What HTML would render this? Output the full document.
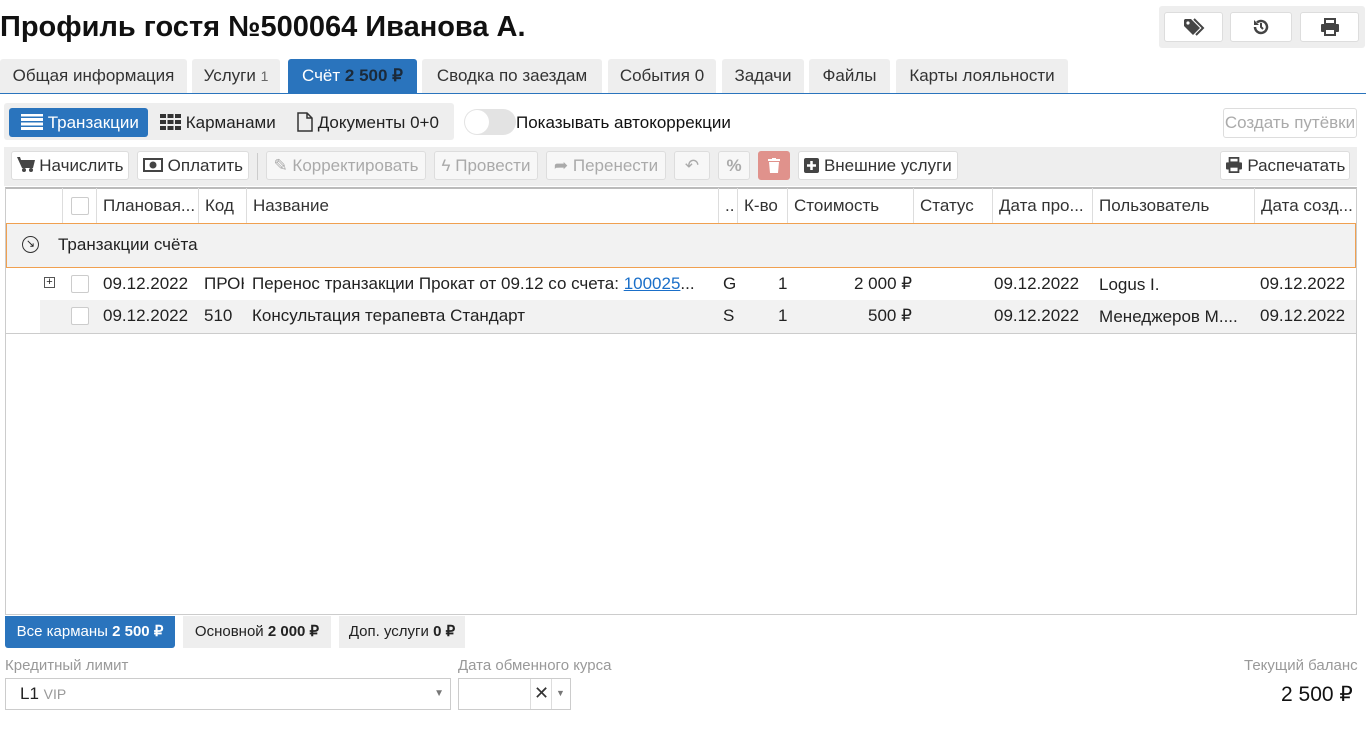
<!DOCTYPE html>
<html><head><meta charset="utf-8"><style>
*{box-sizing:border-box;margin:0;padding:0}
body{width:1368px;height:736px;background:#fff;font-family:"Liberation Sans",sans-serif;font-size:17px;color:#222;position:relative;overflow:hidden}
.a{position:absolute;white-space:nowrap}
h1{position:absolute;left:0;top:11px;font-family:"Liberation Sans",sans-serif;font-size:29px;font-weight:bold;color:#111}
.tab{position:absolute;top:59px;height:34px;background:#eee;border-radius:3px 3px 0 0;line-height:34px;text-align:center;color:#333}
.btn{position:absolute;height:29px;border:1px solid #ddd;border-radius:3px;background:#fff;line-height:27px;text-align:center;color:#333;font-size:17px}
.dis{color:#aaa;background:#f7f7f7}
.th{position:absolute;top:188px;height:35px;line-height:35px;border-left:1px solid #ddd;padding-left:6px;color:#333;overflow:hidden}
.cb{position:absolute;width:18px;height:18px;border:1px solid #ccc;background:#fff;border-radius:2px}
.td{position:absolute;line-height:32px}
</style></head><body>
<h1>Профиль гостя №500064 Иванова А.</h1>
<div class="a" style="left:1159px;top:6px;width:206px;height:42px;background:#eee;border-radius:3px"></div>
<div class="btn" style="left:1164px;top:12px;width:59px;height:30px">
<svg width="22" height="18" viewBox="0 0 22 18" style="margin-top:5px"><path d="M1 2v6l9 9 7-7-9-9H2z" fill="#444"/><circle cx="5" cy="5" r="1.6" fill="#fff"/><path d="M11 1l9 9-7 7" stroke="#444" stroke-width="2" fill="none"/></svg></div>
<div class="btn" style="left:1230px;top:12px;width:62px;height:30px">
<svg width="18" height="18" viewBox="0 0 18 18" style="margin-top:5px"><path d="M3 9a6 6 0 1 0 2-4.5" stroke="#444" stroke-width="2.5" fill="none"/><path d="M2 2v5h5z" fill="#444"/><path d="M9 5v4l2 2" stroke="#444" stroke-width="2" fill="none"/></svg></div>
<div class="btn" style="left:1300px;top:12px;width:59px;height:30px">
<svg width="20" height="18" viewBox="0 0 20 18" style="margin-top:5px"><rect x="5" y="1" width="10" height="5" fill="none" stroke="#444" stroke-width="2"/><rect x="1" y="6" width="18" height="8" rx="1" fill="#444"/><rect x="5" y="11" width="10" height="6" fill="#fff" stroke="#444" stroke-width="2"/></svg></div>

<div class="tab" style="left:0;width:187px">Общая информация</div>
<div class="tab" style="left:192px;width:88px">Услуги <span style="font-size:14px;color:#666">1</span></div>
<div class="tab" style="left:288px;width:129px;background:#2a74bd;color:#fff">Счёт <b style="color:#1b2a3a">2 500 ₽</b></div>
<div class="tab" style="left:422px;width:180px">Сводка по заездам</div>
<div class="tab" style="left:608px;width:108px">События 0</div>
<div class="tab" style="left:722px;width:82px">Задачи</div>
<div class="tab" style="left:809px;width:81px">Файлы</div>
<div class="tab" style="left:896px;width:172px">Карты лояльности</div>
<div class="a" style="left:0;top:93px;width:1366px;height:1px;background:#2a74bd"></div>

<div class="a" style="left:4px;top:103px;width:450px;height:37px;background:#eee;border-radius:3px"></div>
<div class="a" style="left:9px;top:108px;width:139px;height:29px;background:#2a74bd;border-radius:3px;color:#fff;line-height:29px;padding-left:12px">
<svg width="22" height="16" viewBox="0 0 22 16" style="vertical-align:-2px"><path d="M0 1h22M0 5.5h22M0 10h22M0 14.5h22" stroke="#fff" stroke-width="3"/></svg> Транзакции</div>
<div class="a" style="left:160px;top:108px;line-height:29px">
<svg width="21" height="16" viewBox="0 0 21 16" style="vertical-align:-2px" fill="#333"><rect x="0" y="0" width="6" height="4"/><rect x="7.5" y="0" width="6" height="4"/><rect x="15" y="0" width="6" height="4"/><rect x="0" y="6" width="6" height="4"/><rect x="7.5" y="6" width="6" height="4"/><rect x="15" y="6" width="6" height="4"/><rect x="0" y="12" width="6" height="4"/><rect x="7.5" y="12" width="6" height="4"/><rect x="15" y="12" width="6" height="4"/></svg> Карманами</div>
<div class="a" style="left:297px;top:108px;line-height:29px">
<svg width="16" height="20" viewBox="0 0 16 20" style="vertical-align:-4px"><path d="M1 1h9l5 5v13H1z M10 1v5h5" fill="none" stroke="#333" stroke-width="1.5"/></svg> Документы 0+0</div>
<div class="a" style="left:464px;top:109px;width:52px;height:26px;border-radius:13px;background:#e3e3e3"><div style="width:24px;height:24px;border-radius:12px;background:#fff;margin:1px"></div></div>
<div class="a" style="left:516px;top:108px;line-height:29px;color:#111">Показывать автокоррекции</div>
<div class="btn dis" style="left:1223px;top:108px;width:134px;height:30px;background:#fff;color:#aaa">Создать путёвки</div>

<div class="a" style="left:4px;top:147px;width:1353px;height:39px;background:#eee"></div>
<div class="btn" style="left:11px;top:151px;width:118px">
<svg width="18" height="16" viewBox="0 0 18 16" style="vertical-align:-2px" fill="#444"><circle cx="7" cy="13" r="2"/><circle cx="14" cy="13" r="2"/><path d="M0 0h3l1 3h14l-2 8H5z"/></svg> Начислить</div>
<div class="btn" style="left:137px;top:151px;width:112px">
<svg width="20" height="14" viewBox="0 0 20 14" style="vertical-align:-1px"><rect x="1" y="1" width="18" height="12" fill="none" stroke="#444" stroke-width="2"/><circle cx="10" cy="7" r="3.5" fill="#444"/></svg> Оплатить</div>
<div class="a" style="left:257px;top:153px;width:1px;height:27px;background:#ccc"></div>
<div class="btn dis" style="left:266px;top:151px;width:160px">✎ Корректировать</div>
<div class="btn dis" style="left:434px;top:151px;width:104px">ϟ Провести</div>
<div class="btn dis" style="left:546px;top:151px;width:120px">➦ Перенести</div>
<div class="btn dis" style="left:674px;top:151px;width:36px">↶</div>
<div class="btn dis" style="left:718px;top:151px;width:32px;font-weight:bold">%</div>
<div class="btn" style="left:758px;top:151px;width:32px;background:#e0928c;border-color:#e0928c;color:#fff">
<svg width="12" height="15" viewBox="0 0 12 15" style="vertical-align:-2px" fill="#fff"><rect x="0" y="1" width="12" height="2"/><rect x="4" y="0" width="4" height="2"/><path d="M1 4h10l-1 11H2z"/></svg></div>
<div class="btn" style="left:798px;top:151px;width:160px">
<svg width="15" height="15" viewBox="0 0 15 15" style="vertical-align:-2px"><rect width="15" height="15" rx="2" fill="#444"/><path d="M7.5 3v9M3 7.5h9" stroke="#fff" stroke-width="2.5"/></svg> Внешние услуги</div>
<div class="btn" style="left:1220px;top:151px;width:130px">
<svg width="18" height="16" viewBox="0 0 20 18" style="vertical-align:-2px"><rect x="5" y="1" width="10" height="5" fill="none" stroke="#444" stroke-width="2"/><rect x="1" y="6" width="18" height="8" rx="1" fill="#444"/><rect x="5" y="11" width="10" height="6" fill="#fff" stroke="#444" stroke-width="2"/></svg> Распечатать</div>

<div class="a" style="left:5px;top:187px;width:1352px;height:428px;border:1px solid #ccc;border-top:2px solid #bbb"></div>
<div class="th" style="left:62px;width:34px"></div>
<div class="cb" style="left:71px;top:197px"></div>
<div class="th" style="left:96px;width:102px">Плановая...</div>
<div class="th" style="left:198px;width:48px">Код</div>
<div class="th" style="left:246px;width:472px">Название</div>
<div class="th" style="left:718px;width:19px">..</div>
<div class="th" style="left:737px;width:50px">К-во</div>
<div class="th" style="left:787px;width:126px">Стоимость</div>
<div class="th" style="left:913px;width:79px">Статус</div>
<div class="th" style="left:992px;width:100px">Дата про...</div>
<div class="th" style="left:1092px;width:162px">Пользователь</div>
<div class="th" style="left:1254px;width:102px">Дата созд...</div>

<div class="a" style="left:6px;top:223px;width:1350px;height:45px;background:#f2f2f2;border:1px solid #f0a050"></div>
<div class="a" style="left:22px;top:236px;width:17px;height:17px;border:1.5px solid #333;border-radius:50%;font-size:11px;line-height:14px;text-align:center">↘</div>
<div class="a" style="left:58px;top:233px;line-height:24px">Транзакции счёта</div>

<div class="a" style="left:40px;top:300px;width:1316px;height:33px;background:#f2f2f2"></div>
<div class="a" style="left:6px;top:333px;width:1350px;height:1px;background:#ccc"></div>
<div class="a" style="left:44px;top:277px;width:11px;height:11px;border:1px solid #555;font-size:11px;line-height:9px;text-align:center">+</div>
<div class="cb" style="left:71px;top:275px"></div>
<div class="cb" style="left:71px;top:307px"></div>
<div class="td" style="left:103px;top:268px">09.12.2022</div>
<div class="td" style="left:204px;top:268px;width:40px;overflow:hidden">ПРОК</div>
<div class="td" style="left:252px;top:268px">Перенос транзакции Прокат от 09.12 со счета: <span style="color:#1a6fc9;text-decoration:underline">100025</span>...</div>
<div class="td" style="left:723px;top:268px;width:12px;overflow:hidden">GI</div>
<div class="td" style="left:778px;top:268px">1</div>
<div class="td" style="left:854px;top:268px">2 000 ₽</div>
<div class="td" style="left:994px;top:268px">09.12.2022</div>
<div class="td" style="left:1099px;top:269px">Logus I.</div>
<div class="td" style="left:1260px;top:268px">09.12.2022</div>
<div class="td" style="left:103px;top:300px">09.12.2022</div>
<div class="td" style="left:204px;top:300px">510</div>
<div class="td" style="left:252px;top:300px">Консультация терапевта Стандарт</div>
<div class="td" style="left:723px;top:300px;width:12px;overflow:hidden">SI</div>
<div class="td" style="left:778px;top:300px">1</div>
<div class="td" style="left:868px;top:300px">500 ₽</div>
<div class="td" style="left:994px;top:300px">09.12.2022</div>
<div class="td" style="left:1099px;top:301px">Менеджеров М....</div>
<div class="td" style="left:1260px;top:300px">09.12.2022</div>

<div class="a" style="left:5px;top:616px;width:170px;height:32px;background:#2a74bd;color:#fff;line-height:32px;text-align:center;font-size:15px;border-radius:0 0 3px 3px">Все карманы <b>2 500 ₽</b></div>
<div class="a" style="left:183px;top:616px;width:148px;height:32px;background:#eee;line-height:32px;text-align:center;font-size:15px">Основной <b>2 000 ₽</b></div>
<div class="a" style="left:339px;top:616px;width:126px;height:32px;background:#eee;line-height:32px;text-align:center;font-size:15px">Доп. услуги <b>0 ₽</b></div>

<div class="a" style="left:5px;top:657px;color:#999;font-size:15px">Кредитный лимит</div>
<div class="a" style="left:5px;top:678px;width:446px;height:32px;border:1px solid #ccc;line-height:30px;padding-left:14px">L1 <span style="font-size:14px;color:#999">VIP</span><span style="position:absolute;right:6px;font-size:10px;color:#777">▼</span></div>
<div class="a" style="left:458px;top:657px;color:#999;font-size:15px">Дата обменного курса</div>
<div class="a" style="left:458px;top:678px;width:113px;height:32px;border:1px solid #ccc"></div>
<div class="a" style="left:530px;top:679px;width:1px;height:30px;background:#ddd"></div>
<div class="a" style="left:551px;top:679px;width:1px;height:30px;background:#ddd"></div>
<div class="a" style="left:534px;top:683px;font-size:18px;color:#333">✕</div>
<div class="a" style="left:556px;top:688px;font-size:9px;color:#777">▼</div>
<div class="a" style="left:1244px;top:657px;color:#999;font-size:15px">Текущий баланс</div>
<div class="a" style="left:1281px;top:682px;font-size:21px;color:#111">2 500 ₽</div>
</body></html>
